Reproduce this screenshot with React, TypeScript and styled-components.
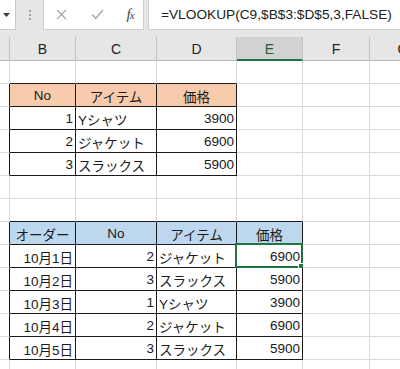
import React from "react";
import styled, { createGlobalStyle } from "styled-components";

const Global = createGlobalStyle`
  html, body { margin: 0; padding: 0; background: #ffffff; }
  body { width: 400px; height: 369px; overflow: hidden; font-family: "Liberation Sans", "Noto Sans CJK JP", sans-serif; }
`;

const Page = styled.div`
  width: 400px;
  height: 369px;
  overflow: hidden;
  display: flex;
  flex-direction: column;
  background: #ffffff;
`;

const Toolbar = styled.div`
  display: flex;
  align-items: flex-start;
  height: 37px;
  flex: none;
  background: #e6e6e6;
`;

const NameBox = styled.div`
  box-sizing: border-box;
  width: 16px;
  flex: none;
  height: 30px;
  background: #ffffff;
  border-right: 1px solid #c8c8c8;
  border-bottom: 1px solid #c8c8c8;
  display: flex;
  align-items: center;
  justify-content: flex-start;
  padding-left: 3px;
`;

const Grip = styled.div`
  width: 27px;
  flex: none;
  height: 30px;
  display: flex;
  flex-direction: column;
  align-items: center;
  justify-content: center;
  gap: 2px;
`;

const Dot = styled.span`
  width: 2px;
  height: 2px;
  background: #a0a0a0;
`;

const FuncBox = styled.div`
  box-sizing: border-box;
  width: 101px;
  flex: none;
  height: 30px;
  background: #ffffff;
  border: 1px solid #cfcfcf;
  border-top: none;
  display: flex;
  align-items: center;
  padding-left: 11px;
`;

const FuncIcon = styled.div<{ $w: number }>`
  width: ${(p) => p.$w}px;
  height: 28px;
  display: flex;
  align-items: center;
  justify-content: center;
`;

const Fx = styled.span`
  font-family: "Liberation Serif", serif;
  font-style: italic;
  font-size: 15px;
  color: #444;
  letter-spacing: -1px;
  & small { font-size: 11px; }
`;

const FormulaBox = styled.div`
  box-sizing: border-box;
  flex: 1;
  margin-left: 4px;
  height: 30px;
  background: #ffffff;
  border-left: 1px solid #cfcfcf;
  border-bottom: 1px solid #cfcfcf;
  display: flex;
  align-items: center;
  padding-left: 12px;
  font-family: "Liberation Sans", sans-serif;
  font-size: 13.7px;
  color: #222;
  white-space: nowrap;
  overflow: hidden;
`;

const Sheet = styled.div`
  display: grid;
  grid-template-columns: 10px 66px 81px 80px 66px 67px 67px;
  grid-template-rows: 24px repeat(14, 23px);
  width: 400px;
  overflow: hidden;
  flex: none;
`;

const ColHead = styled.div<{ $sel?: boolean }>`
  box-sizing: border-box;
  background: ${(p) => (p.$sel ? "#d2d2d2" : "#e6e6e6")};
  border-right: 1px solid #c2c2c2;
  border-bottom: ${(p) => (p.$sel ? "2px solid #217346" : "1px solid #b8b8b8")};
  display: flex;
  align-items: center;
  justify-content: center;
  font-family: "Liberation Sans", sans-serif;
  font-size: 14px;
  color: ${(p) => (p.$sel ? "#1e5e3a" : "#222")};
  padding-top: ${(p) => (p.$sel ? "1px" : "0")};
`;

const Cell = styled.div<{
  $align: "left" | "right" | "center";
  $fill?: string;
  $rb: boolean;
  $bb: boolean;
}>`
  position: relative;
  box-sizing: border-box;
  background: ${(p) => p.$fill || "#ffffff"};
  border-right: 1px solid ${(p) => (p.$rb ? "#1a1a1a" : "#d9d9d9")};
  border-bottom: 1px solid ${(p) => (p.$bb ? "#1a1a1a" : "#d9d9d9")};
  display: flex;
  align-items: center;
  justify-content: ${(p) =>
    p.$align === "left" ? "flex-start" : p.$align === "right" ? "flex-end" : "center"};
  padding: 1px 2px 0 2px;
  font-family: "Liberation Sans", "Noto Sans CJK JP", sans-serif;
  font-size: 13.5px;
  color: #1a1a1a;
  white-space: nowrap;
`;

const Selection = styled.div`
  position: absolute;
  left: -2px;
  top: -2px;
  right: -1px;
  bottom: -1px;
  border: 2px solid #217346;
  pointer-events: none;
`;

const FillHandle = styled.div`
  position: absolute;
  right: -4px;
  bottom: -4px;
  width: 5px;
  height: 5px;
  background: #217346;
  border: 1px solid #ffffff;
`;

type Align = "left" | "right" | "center";
type CellData = { t: string; a: Align; fill?: string };

const PEACH = "#f8cbad";
const BLUE = "#bdd7ee";

const COLS = ["", "B", "C", "D", "E", "F", "G"];

const tables = [
  { r0: 2, r1: 5, c0: 1, c1: 3 },
  { r0: 8, r1: 13, c0: 1, c1: 4 },
];

const data: Record<string, CellData> = {};
const put = (r: number, c: number, t: string, a: Align, fill?: string) => {
  data[`${r}-${c}`] = { t, a, fill };
};

put(2, 1, "No", "center", PEACH);
put(2, 2, "アイテム", "center", PEACH);
put(2, 3, "価格", "center", PEACH);
[
  ["1", "Yシャツ", "3900"],
  ["2", "ジャケット", "6900"],
  ["3", "スラックス", "5900"],
].forEach((row, i) => {
  put(3 + i, 1, row[0], "right");
  put(3 + i, 2, row[1], "left");
  put(3 + i, 3, row[2], "right");
});

put(8, 1, "オーダー", "center", BLUE);
put(8, 2, "No", "center", BLUE);
put(8, 3, "アイテム", "center", BLUE);
put(8, 4, "価格", "center", BLUE);
[
  ["10月1日", "2", "ジャケット", "6900"],
  ["10月2日", "3", "スラックス", "5900"],
  ["10月3日", "1", "Yシャツ", "3900"],
  ["10月4日", "2", "ジャケット", "6900"],
  ["10月5日", "3", "スラックス", "5900"],
].forEach((row, i) => {
  put(9 + i, 1, row[0], "right");
  put(9 + i, 2, row[1], "right");
  put(9 + i, 3, row[2], "left");
  put(9 + i, 4, row[3], "right");
});

const rightBlack = (r: number, c: number) =>
  tables.some((t) => r >= t.r0 && r <= t.r1 && c >= t.c0 - 1 && c <= t.c1);
const bottomBlack = (r: number, c: number) =>
  tables.some((t) => c >= t.c0 && c <= t.c1 && r >= t.r0 - 1 && r <= t.r1);

const CrossIcon = () => (
  <svg width="11" height="11" viewBox="0 0 11 11">
    <path d="M1 1 L10 10 M10 1 L1 10" stroke="#a6a6a6" strokeWidth="1.3" fill="none" />
  </svg>
);

const CheckIcon = () => (
  <svg width="13" height="11" viewBox="0 0 13 11">
    <path d="M1 5.5 L4.8 9.5 L12 1" stroke="#a6a6a6" strokeWidth="1.4" fill="none" />
  </svg>
);

const DropArrow = () => (
  <svg width="7" height="4" viewBox="0 0 7 4" style={{ flex: "none" }}>
    <path d="M0 0 H7 L3.5 4 Z" fill="#3c3c3c" />
  </svg>
);

export default function App() {
  const rows: React.ReactNode[] = [];
  for (let r = 1; r <= 14; r++) {
    for (let c = 0; c < COLS.length; c++) {
      const d = data[`${r}-${c}`];
      const sel = r === 9 && c === 4;
      rows.push(
        <Cell
          key={`${r}-${c}`}
          $align={d ? d.a : "left"}
          $fill={d?.fill}
          $rb={rightBlack(r, c)}
          $bb={bottomBlack(r, c)}
        >
          {d ? d.t : ""}
          {sel && (
            <Selection>
              <FillHandle />
            </Selection>
          )}
        </Cell>
      );
    }
  }

  return (
    <Page>
      <Global />
      <Toolbar>
        <NameBox>
          <DropArrow />
        </NameBox>
        <Grip>
          <Dot />
          <Dot />
          <Dot />
        </Grip>
        <FuncBox>
          <FuncIcon $w={13}>
            <CrossIcon />
          </FuncIcon>
          <FuncIcon $w={22} />
          <FuncIcon $w={14}>
            <CheckIcon />
          </FuncIcon>
          <FuncIcon $w={18} />
          <FuncIcon $w={16}>
            <Fx>
              f<small>x</small>
            </Fx>
          </FuncIcon>
        </FuncBox>
        <FormulaBox>=VLOOKUP(C9,$B$3:$D$5,3,FALSE)</FormulaBox>
      </Toolbar>
      <Sheet>
        {COLS.map((c) => (
          <ColHead key={`h-${c}`} $sel={c === "E"}>
            {c}
          </ColHead>
        ))}
        {rows}
      </Sheet>
    </Page>
  );
}
